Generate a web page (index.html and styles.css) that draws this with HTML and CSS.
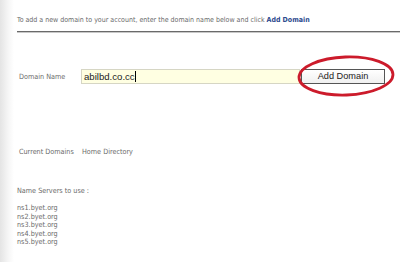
FILE: index.html
```html
<!DOCTYPE html>
<html>
<head>
<meta charset="utf-8">
<link rel="stylesheet" href="styles.css">
</head>
<body>
<div class="page">
  <div class="side"></div>
  <div class="main">
    <p class="intro">To add a new domain to your account, enter the domain name below and click <b>Add Domain</b></p>
    <div class="rule"></div>
    <div class="form-row">
      <span class="label">Domain Name</span>
      <div class="input"><span>abilbd.co.cc</span><i class="caret"></i></div>
      <div class="btn-wrap">
        <button class="btn">Add Domain</button>
        <svg class="circle" width="100" height="44" viewBox="0 0 100 44"><ellipse cx="50" cy="22" rx="47" ry="19" fill="none" stroke="#cc1b2b" stroke-width="2.8" transform="rotate(-2 50 22)"/></svg>
      </div>
    </div>
    <div class="cols">
      <span class="c1">Current Domains</span>
      <span class="c2">Home Directory</span>
    </div>
    <p class="ns-title">Name Servers to use :</p>
    <div class="ns">
      <div>ns1.byet.org</div>
      <div>ns2.byet.org</div>
      <div>ns3.byet.org</div>
      <div>ns4.byet.org</div>
      <div>ns5.byet.org</div>
    </div>
  </div>
</div>
</body>
</html>
```
FILE: styles.css
```css
html, body { margin: 0; padding: 0; background: #fff; }
body { width: 400px; height: 262px; overflow: hidden; font-family: "DejaVu Sans Condensed", "DejaVu Sans", Tahoma, sans-serif; font-stretch: condensed; color: #6a6a6a; }
.page { display: flex; height: 262px; }
.side { width: 14px; flex: none; background: linear-gradient(to right, #e4e4e4, #f6f6f6 60%, #fff); }
.main { flex: 1; padding-left: 3px; }
.intro { margin: 15px 0 0 0; font-size: 7px; line-height: 10px; }
.intro b { color: #2c4a8e; }
.rule { height: 1px; background: #6a6a6a; margin-top: 6px; border-bottom: 1px solid #c8c8c8; }
.form-row { display: flex; align-items: center; margin-top: 35px; height: 16px; }
.label { width: 62px; flex: none; padding-left: 2px; font-size: 7.2px; }
.input { width: 219px; height: 15px; flex: none; background: #ffffe2; border: 1px solid #d6d6c4; display: flex; align-items: center; padding-left: 2px; box-sizing: border-box; font-family: "Liberation Sans", Arial, sans-serif; font-stretch: normal; font-size: 9.6px; color: #222; }
.caret { display: inline-block; width: 1px; height: 11px; background: #000; }
.btn-wrap { position: relative; margin-left: 1px; }
.btn { width: 84px; height: 15px; background: linear-gradient(#fff, #f0f0f0); border: 1px solid #555; font-family: "Liberation Sans", Arial, sans-serif; font-size: 9.2px; color: #222; padding: 0; display: block; }
.circle { position: absolute; left: -5px; top: -15px; }
.cols { margin-top: 63px; font-size: 7.2px; display: flex; }
.c1 { width: 63px; padding-left: 2px; }
.ns-title { margin: 30px 0 0 0; font-size: 7.2px; }
.ns { margin-top: 9px; font-size: 7.2px; line-height: 8.5px; }
```
